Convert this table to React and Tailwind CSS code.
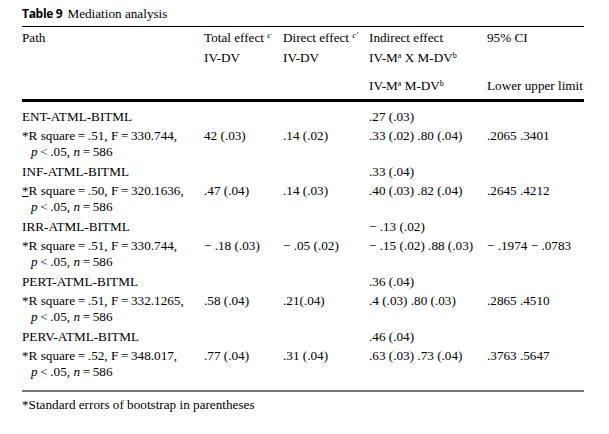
import React from 'react';

const T = '\u2009';

const groups = [
  {
    name: 'ENT-ATML-BITML',
    indirectTotal: '.27 (.03)',
    r: <>*R square{T}={T}.51, F{T}={T}330.744,</>,
    total: '42 (.03)',
    direct: '.14 (.02)',
    indirect: '.33 (.02) .80 (.04)',
    ci: '.2065 .3401',
  },
  {
    name: 'INF-ATML-BITML',
    indirectTotal: '.33 (.04)',
    r: <><span className="underline">*</span>R square{T}={T}.50, F{T}={T}320.1636,</>,
    total: '.47 (.04)',
    direct: '.14 (.03)',
    indirect: '.40 (.03) .82 (.04)',
    ci: '.2645 .4212',
  },
  {
    name: 'IRR-ATML-BITML',
    indirectTotal: '− .13 (.02)',
    r: <>*R square{T}={T}.51, F{T}={T}330.744,</>,
    total: '− .18 (.03)',
    direct: '− .05 (.02)',
    indirect: '− .15 (.02) .88 (.03)',
    ci: '− .1974 − .0783',
  },
  {
    name: 'PERT-ATML-BITML',
    indirectTotal: '.36 (.04)',
    r: <>*R square{T}={T}.51, F{T}={T}332.1265,</>,
    total: '.58 (.04)',
    direct: '.21(.04)',
    indirect: '.4 (.03) .80 (.03)',
    ci: '.2865 .4510',
  },
  {
    name: 'PERV-ATML-BITML',
    indirectTotal: '.46 (.04)',
    r: <>*R square{T}={T}.52, F{T}={T}348.017,</>,
    total: '.77 (.04)',
    direct: '.31 (.04)',
    indirect: '.63 (.03) .73 (.04)',
    ci: '.3763 .5647',
  },
];

const cols = 'grid grid-cols-[182px_79px_86px_118px_97px] whitespace-nowrap';

const App = () => {
  return (
    <div className="w-[609px] h-[434px] bg-white text-black font-['Liberation_Serif'] text-[13.2px] leading-[16px]">
      <div className="pl-[22px] w-[584px] pt-[6px]">
        <div className="flex items-baseline gap-[5px] h-[20px]">
          <span className="font-['Open_Sans'] font-bold text-[12px] tracking-[-0.3px]">Table 9</span>
          <span>Mediation analysis</span>
        </div>
        <div className="border-t border-black pt-[3px] pb-[5px] border-b-[3px] border-b-double">
          <div className={cols}>
            <div>Path</div>
            <div>Total effect <sup className="text-[9px] italic">c</sup></div>
            <div>Direct effect <sup className="text-[9px] italic">c′</sup></div>
            <div>Indirect effect</div>
            <div>95% CI</div>
          </div>
          <div className={`${cols} mt-[4px]`}>
            <div />
            <div>IV-DV</div>
            <div>IV-DV</div>
            <div>IV-M<sup className="text-[8px]">a</sup> X M-DV<sup className="text-[8px]">b</sup></div>
            <div />
          </div>
          <div className={`${cols} mt-[12px]`}>
            <div />
            <div />
            <div />
            <div>IV-M<sup className="text-[8px]">a</sup> M-DV<sup className="text-[8px]">b</sup></div>
            <div>Lower upper limit</div>
          </div>
        </div>
        <div className="pt-[7px] pb-[6px] border-b-2 border-[#7a7a7a]">
          {groups.map((g) => (
            <div key={g.name} className="pb-[4px]">
              <div className={`${cols} h-[19px]`}>
                <div>{g.name}</div>
                <div />
                <div />
                <div>{g.indirectTotal}</div>
                <div />
              </div>
              <div className={cols}>
                <div>{g.r}</div>
                <div>{g.total}</div>
                <div>{g.direct}</div>
                <div>{g.indirect}</div>
                <div>{g.ci}</div>
              </div>
              <div className={cols}>
                <div className="pl-[9px]"><i>p</i>{T}&lt;{T}.05, <i>n</i>{T}={T}586</div>
              </div>
            </div>
          ))}
        </div>
        <div className="pt-[5px]">*Standard errors of bootstrap in parentheses</div>
      </div>
    </div>
  );
};

export default App;
